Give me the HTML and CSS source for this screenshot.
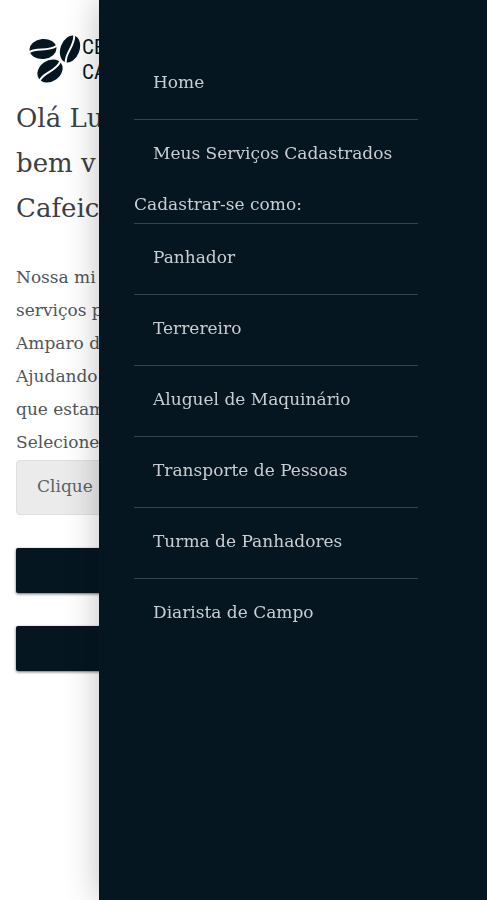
FILE: index.html
```html
<!DOCTYPE html>
<html lang="pt-BR">
<head>
  <meta charset="UTF-8" />
  <meta name="viewport" content="width=device-width, initial-scale=1.0" />
  <title>Cafeicultor</title>
  <link rel="stylesheet" href="styles.css">
</head>
<body>
  <main class="pagina">
    <header class="logo">
      <svg class="graos" viewBox="0 0 52 50" aria-hidden="true">
        <g transform="translate(14 14) rotate(-5)">
          <ellipse rx="13.5" ry="10" />
          <path d="M-14 2C-6 -3 4 4 14 -2" />
        </g>
        <g transform="translate(41 14) rotate(-70)">
          <ellipse rx="14" ry="9.5" />
          <path d="M-15 1C-6 -4 4 4 15 -1" />
        </g>
        <g transform="translate(21 36) rotate(-35)">
          <ellipse rx="13.5" ry="10.5" />
          <path d="M-14 2C-6 -3 4 4 14 -2" />
        </g>
      </svg>
      <span class="logo-nome">CE<br>CA</span>
    </header>

    <h1>Olá Lu<br>bem v<br>Cafeicu</h1>

    <p class="texto">Nossa mi<br>serviços p<br>Amparo d<br>Ajudando<br>que estam<br>Selecione</p>

    <button type="button" class="escolha">Clique</button>
    <button type="button" class="botao"></button>
    <button type="button" class="botao"></button>
  </main>

  <nav class="menu">
    <ul>
      <li><a href="#">Home</a></li>
      <li><a href="#">Meus Serviços Cadastrados</a></li>
    </ul>
    <h2>Cadastrar-se como:</h2>
    <ul>
      <li><a href="#">Panhador</a></li>
      <li><a href="#">Terrereiro</a></li>
      <li><a href="#">Aluguel de Maquinário</a></li>
      <li><a href="#">Transporte de Pessoas</a></li>
      <li><a href="#">Turma de Panhadores</a></li>
      <li><a href="#">Diarista de Campo</a></li>
    </ul>
  </nav>
</body>
</html>
```
FILE: styles.css
```css
:root {
  --escuro: #051621;
  --linha: #34434e;
  --claro: #c9ced2;
}

* {
  box-sizing: border-box;
  margin: 0;
  padding: 0;
}

body {
  background: #fff;
  color: #50565a;
  font-family: "DejaVu Serif", serif;
  font-size: 17px;
}

.pagina {
  padding: 35px 16px;
}

.logo {
  display: flex;
  gap: 1px;
  height: 61px;
  padding-left: 13px;
}

.graos {
  width: 52px;
  height: 50px;
  fill: var(--escuro);
}

.graos path {
  fill: none;
  stroke: #fff;
  stroke-width: 2;
}

.logo-nome {
  color: var(--escuro);
  font-family: "Roboto Condensed", "Liberation Sans Narrow", "Liberation Sans", sans-serif;
  font-size: 21px;
  line-height: 25px;
}

h1 {
  color: #3a4043;
  font-size: 26px;
  font-weight: normal;
  line-height: 45px;
  margin-bottom: 30px;
}

.texto {
  line-height: 33px;
  margin-bottom: 1px;
}

button {
  display: block;
  width: 100%;
  border: none;
  border-radius: 4px;
  font: inherit;
  cursor: pointer;
}

.escolha {
  height: 55px;
  padding: 0 20px 4px;
  background: #ebebec;
  border: 1px solid #dfdfe0;
  color: #5c6266;
  text-align: left;
  margin-bottom: 33px;
}

.botao {
  height: 45px;
  background: var(--escuro);
  border-radius: 2px;
  box-shadow: 0 1px 3px rgba(0, 0, 0, 0.6);
  margin-bottom: 33px;
}

/* menu lateral aberto por cima da página */
.menu {
  position: fixed;
  top: 0;
  right: 0;
  bottom: 0;
  width: calc(100% - 99px);
  padding: 49px 69px 0 35px;
  overflow-y: auto;
  background: var(--escuro);
  color: var(--claro);
  box-shadow: 0 0 32px rgba(0, 0, 0, 0.25);
}

.menu ul {
  list-style: none;
}

.menu li + li {
  border-top: 1px solid var(--linha);
}

.menu a {
  display: block;
  padding: 18px 0 22px 19px;
  color: inherit;
  line-height: 30px;
  text-decoration: none;
  white-space: nowrap;
}

.menu h2 {
  border-bottom: 1px solid var(--linha);
  padding-bottom: 4px;
  font-size: 17px;
  font-weight: normal;
  line-height: 29px;
}
```
